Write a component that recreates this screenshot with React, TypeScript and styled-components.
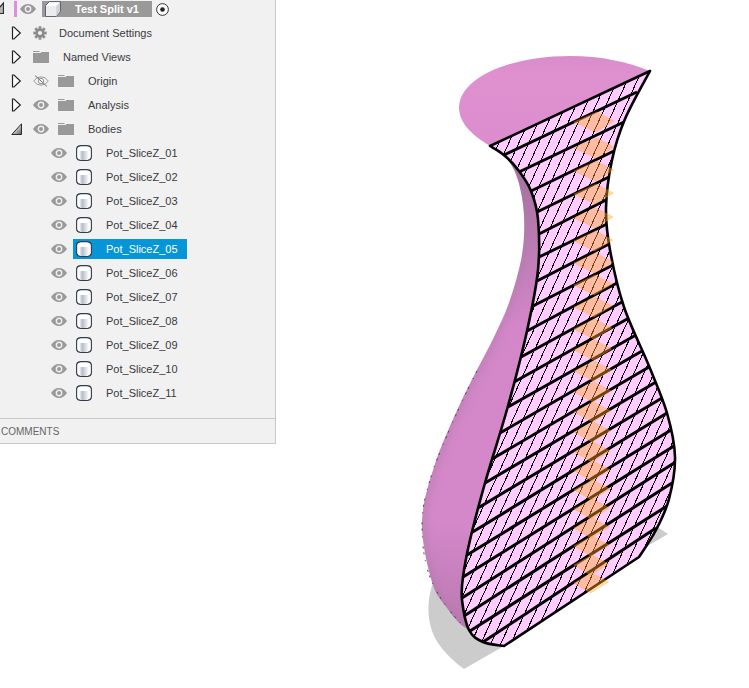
import React, { useState } from "react";
import styled, { createGlobalStyle } from "styled-components";

const GlobalStyle = createGlobalStyle`
  *, *::before, *::after { box-sizing: border-box; }
  body {
    margin: 0;
    background: #ffffff;
    color: #3a3a3e;
    font-family: "Liberation Sans", Arial, sans-serif;
    font-size: 11px;
    line-height: 16px;
  }
`;

const Page = styled.main`
  display: flex;
  align-items: flex-start;
  min-height: 100vh;
`;

const Browser = styled.aside`
  flex: none;
  width: 276px;
  background: #f1f1f1;
  border: solid #c8c8c8;
  border-width: 0 1px 1px 0;
`;

const Tree = styled.ul`
  margin: 0;
  padding: 0 0 13px;
  list-style: none;
`;

const Row = styled.li<{ $indent: number }>`
  display: flex;
  align-items: center;
  height: 24px;
  padding-left: ${(p) => p.$indent}px;
`;

const RootRow = styled.li`
  display: flex;
  align-items: center;
  height: 21px;
  padding: 1px 0 4px;
`;

const IconButton = styled.button<{ $gap: number }>`
  display: flex;
  flex: none;
  margin: 0 ${(p) => p.$gap}px 0 0;
  padding: 0;
  border: 0;
  background: none;
  cursor: pointer;
`;

const ColorBar = styled.span`
  width: 3px;
  height: 16px;
  margin: 0 3px 0 10px;
  background: #e38be3;
`;

const RootLabel = styled.button`
  display: flex;
  align-items: center;
  gap: 14px;
  height: 16px;
  margin: 0 4px 0 6px;
  padding: 0 13px 0 3px;
  border: 0;
  background: #999999;
  color: #ffffff;
  font: inherit;
  font-weight: bold;
  cursor: pointer;
`;

const ItemLabel = styled.span<{ $gap?: number }>`
  display: flex;
  align-items: center;
  gap: ${(p) => p.$gap ?? 14}px;
  white-space: nowrap;
`;

const BodyLabel = styled.button<{ $selected: boolean }>`
  display: flex;
  align-items: center;
  gap: 14px;
  height: 20px;
  padding: 0 9px 0 3px;
  border: 0;
  background: ${(p) => (p.$selected ? "#0696d7" : "transparent")};
  color: ${(p) => (p.$selected ? "#ffffff" : "inherit")};
  font: inherit;
  white-space: nowrap;
  cursor: pointer;
`;

const Comments = styled.h2`
  height: 25px;
  margin: 0;
  padding: 1px 1px 0;
  border-top: 1px solid #c8c8c8;
  color: #666666;
  font-size: 10px;
  font-weight: normal;
  line-height: 24px;
`;

const Viewport = styled.section`
  flex: 1;
  min-width: 0;
`;

const Drawing = styled.svg`
  display: block;
  width: 100%;
  height: auto;
`;

const Eye = ({ hidden = false }: { hidden?: boolean }) => (
  <svg width="16" height="16" viewBox="0 0 16 16" aria-hidden="true">
    {hidden ? (
      <g fill="none" stroke="#999" strokeWidth="1">
        <path d="M.7 8Q3.5 3.8 8 3.8T15.3 8Q12.5 12.2 8 12.2T.7 8Z" />
        <circle cx="8" cy="8" r="2.7" />
        <path d="M2 2.5L14 13.5" stroke="#777" />
      </g>
    ) : (
      <>
        <path d="M0 8Q3.3 3 8 3T16 8Q12.7 13 8 13T0 8Z" fill="#999" />
        <circle cx="8" cy="8" r="2.7" fill="#999" stroke="#f1f1f1" strokeWidth="1.4" />
      </>
    )}
  </svg>
);

const Folder = () => (
  <svg width="16" height="16" viewBox="0 0 16 16" aria-hidden="true">
    <path d="M0 2h6l1 1H0zM0 4h7.5l1-1H16v11H0z" fill="#999" />
  </svg>
);

const Gear = () => (
  <svg width="14" height="14" viewBox="-7 -7 14 14" aria-hidden="true">
    {[0, 45, 90, 135].map((a) => (
      <rect key={a} x="-1.4" y="-6.7" width="2.8" height="13.4" fill="#8c8c8c" transform={`rotate(${a})`} />
    ))}
    <circle r="4.6" fill="#8c8c8c" />
    <circle r="2.1" fill="#f1f1f1" />
  </svg>
);

const Arrow = ({ open = false }: { open?: boolean }) => (
  <svg width="11" height="14" viewBox="0 0 11 14" aria-hidden="true">
    {open ? (
      <>
        <defs>
          <linearGradient id="arrowShade" x1="0" y1="0" x2="1" y2="1">
            <stop offset="0.3" stopColor="#f5f5f5" />
            <stop offset="1" stopColor="#555" />
          </linearGradient>
        </defs>
        <path d="M.8 12.5L10.5 1.8V12.5Z" fill="url(#arrowShade)" stroke="#2b2b2b" />
      </>
    ) : (
      <path d="M1.5 1H3L9.3 7L3 13H1.5Z" fill="#fafafa" stroke="#222" strokeWidth="1.2" />
    )}
  </svg>
);

const RootArrow = () => (
  <svg width="4" height="16" viewBox="0 0 4 16" aria-hidden="true">
    <path d="M0 6L3.5 2V12.5H0Z" fill="#b5b5b5" />
    <path d="M0 6L3.5 2V12.5H0" fill="none" stroke="#2b2b2b" strokeWidth="1.2" />
  </svg>
);

const Cube = () => (
  <svg width="16" height="16" viewBox="0 0 16 16" aria-hidden="true">
    <path d="M.6 4.6L4.3.6H15.4V10.6L11.3 15.4H.6Z" fill="#fff" stroke="#555b66" />
    <path d="M1 5H11.2V15H1Z" fill="#ececf0" />
    <path d="M11.2 5L15 1.2V10.5L11.2 15Z" fill="#cfd2d9" />
  </svg>
);

const Cylinder = () => (
  <svg width="16" height="16" viewBox="0 0 16 16" aria-hidden="true">
    <defs>
      <linearGradient id="bodyShade">
        <stop offset="0" stopColor="#e6e8ee" />
        <stop offset="0.3" stopColor="#b8bdc8" />
        <stop offset="1" stopColor="#f4f5f8" />
      </linearGradient>
    </defs>
    <path d="M.6 3.5Q1.5 .6 5 .6H11Q14.5 .6 15.4 3.5V12.5Q14.5 15.4 11 15.4H5Q1.5 15.4 .6 12.5Z" fill="#fff" stroke="#343b4a" strokeWidth="1.1" />
    <rect x="4" y="6" width="8" height="9" fill="url(#bodyShade)" />
  </svg>
);

const Target = () => (
  <svg width="13" height="13" viewBox="0 0 13 13" aria-hidden="true">
    <circle cx="6.5" cy="6.5" r="5.9" fill="#fafafa" stroke="#333" />
    <circle cx="6.5" cy="6.5" r="2.3" fill="#222" />
  </svg>
);

type Point = [number, number];

/* Ends of each slice seam, top to bottom: left wall and right wall of the cut. */
const seams: [Point, Point][] = [
  [[504, 155], [637, 92]],
  [[519, 172], [624, 122]],
  [[531, 191], [614, 151]],
  [[537, 212], [609, 177]],
  [[539, 234], [606, 200]],
  [[539, 257], [607, 224]],
  [[537, 281], [609, 244]],
  [[533, 306], [613, 265]],
  [[527, 331], [617, 283]],
  [[521, 357], [622, 302]],
  [[514, 382], [629, 318]],
  [[508, 407], [636, 335]],
  [[500, 433], [642, 351]],
  [[492, 459], [649, 367]],
  [[485, 483], [656, 382]],
  [[478, 508], [662, 398]],
  [[471, 533], [667, 413]],
  [[467, 555], [671, 430]],
  [[463, 577], [674, 446]],
  [[462, 598], [674, 463]],
  [[464, 616], [672, 483]],
  [[470, 631], [667, 506]],
  [[483, 642], [656, 528]],
];

const diamondY = [
  121, 147, 170, 193, 217, 240, 262, 284, 306, 328, 349, 370, 391, 411, 431, 451, 470, 489, 508, 527, 545, 564, 582,
];

/* Smooth path through the points, Catmull-Rom converted to Bézier segments. */
function curve(points: Point[]): string {
  return points
    .slice(0, -1)
    .map((p, i) => {
      const before = points[Math.max(i - 1, 0)];
      const next = points[i + 1];
      const after = points[Math.min(i + 2, points.length - 1)];
      const c = [
        p[0] + (next[0] - before[0]) / 6,
        p[1] + (next[1] - before[1]) / 6,
        next[0] - (after[0] - p[0]) / 6,
        next[1] - (after[1] - p[1]) / 6,
      ];
      return `C${c.join(" ")} ${next.join(" ")}`;
    })
    .join("");
}

const leftWall: Point[] = [
  [490, 146], [504, 155], [519, 171], [531, 191], [538, 219], [538, 270], [527, 331], [508, 406], [485, 483],
  [470, 540], [463, 577], [462, 600], [469, 630], [483, 642], [504, 646],
];
const rightWall: Point[] = [
  [639, 557], [656, 530], [669, 499], [675, 457], [667, 413], [649, 366], [624, 307], [610, 250], [606, 208],
  [612, 160], [625, 119], [650, 71],
];
const section = `M490 146${curve(leftWall)}L639 557${curve(rightWall)}Z`;

const outside: Point[] = [
  [490, 146], [507, 159], [518, 180], [524, 215], [522, 255], [510, 300], [494, 337],
  [460, 404], [434, 467], [422, 523], [432, 582], [447, 608], [467, 629], [504, 646],
];
const outline = `M490 146${curve(outside)}`;
const shell = `${outline}L560 560L560 300L560 200Z`;

const Vase = () => (
  <Drawing viewBox="276 0 473 688" role="img" aria-label="Section view of the sliced pot">
    <defs>
      <clipPath id="cut">
        <path d={section} />
      </clipPath>
      <clipPath id="shell">
        <path d={shell} />
      </clipPath>
      <linearGradient id="wall" gradientUnits="userSpaceOnUse" x1="0" y1="146" x2="0" y2="646">
        <stop offset="0" stopColor="#9d6f98" />
        <stop offset="0.1" stopColor="#ad74a7" />
        <stop offset="0.2" stopColor="#bd7cb5" />
        <stop offset="0.36" stopColor="#d386c8" />
        <stop offset="0.75" stopColor="#d488c9" />
        <stop offset="1" stopColor="#b677ae" />
      </linearGradient>
      <linearGradient id="rim" x1="0" y1="0" x2="0" y2="1">
        <stop offset="0" stopColor="#d98ccb" />
        <stop offset="0.2" stopColor="#de90cf" />
        <stop offset="1" stopColor="#dc8dcd" />
      </linearGradient>
      <filter id="soft" x="-20%" y="-5%" width="140%" height="110%">
        <feGaussianBlur stdDeviation="4" />
      </filter>
    </defs>
    <path d="M434 580C426 600 426 625 438 643C444 652 452 660 464 669L504 646L470 580Z" fill="#cccccc" />
    <path d="M656 526L668 534L639 551Z" fill="#cccccc" />
    <path d={shell} fill="url(#wall)" />
    <g clipPath="url(#shell)">
      <path d={outline} fill="none" stroke="#a878a2" strokeOpacity="0.6" strokeWidth="6" filter="url(#soft)" />
    </g>
    <path d="M477 371C460 404 443 444 434 467C425 495 422 510 422 523C422 548 425 566 432 582C440 600 455 619 467 629" fill="none" stroke="#4a3a48" strokeWidth="1" strokeDasharray="2 6 1 9 2 4" />
    <path d="M490 146C470 134 459 122 459 107C460 77 511 56 570 56C602 56 627 62 650 71Z" fill="url(#rim)" />
    <path d={section} fill="#ffccff" />
    <g clipPath="url(#cut)">
      <g stroke="#000" strokeWidth="1" shapeRendering="crispEdges">
        {Array.from({ length: 54 }, (_, i) => {
          const x = 188 + i * 10;
          return <line key={i} x1={x} y1="650" x2={x + 264} y2="70" />;
        })}
      </g>
      <g stroke="#000" strokeWidth="3">
        {seams.map(([a, b]) => (
          <line key={a[1]} x1={a[0]} y1={a[1]} x2={b[0]} y2={b[1]} />
        ))}
      </g>
    </g>
    <path d={section} fill="none" stroke="#000" strokeWidth="2.6" strokeLinejoin="round" />
    <g fill="#ffa526" fillOpacity="0.42" stroke="#ffa526" strokeOpacity="0.3" strokeWidth="1">
      {diamondY.map((y, i) => {
        const right = 614 - i * 0.25;
        return <path key={y} d={`M574 ${y + 1}L${right - 17} ${y - 9}L${right} ${y}L${right - 18} ${y + 11}Z`} />;
      })}
    </g>
  </Drawing>
);

const bodies = Array.from({ length: 11 }, (_, i) => `Pot_SliceZ_${String(i + 1).padStart(2, "0")}`);

export default function App() {
  const [selected, setSelected] = useState("Pot_SliceZ_05");
  return (
    <>
      <GlobalStyle />
      <Page>
        <Browser>
          <Tree>
            <RootRow>
              <IconButton $gap={0} aria-label="Collapse Test Split v1"><RootArrow /></IconButton>
              <ColorBar />
              <IconButton $gap={0} aria-label="Hide Test Split v1"><Eye /></IconButton>
              <RootLabel><Cube />Test Split v1</RootLabel>
              <IconButton $gap={0} aria-label="Activate Test Split v1"><Target /></IconButton>
            </RootRow>
            <Row $indent={11}>
              <IconButton $gap={11} aria-label="Expand Document Settings"><Arrow /></IconButton>
              <ItemLabel $gap={12}><Gear />Document Settings</ItemLabel>
            </Row>
            <Row $indent={11}>
              <IconButton $gap={11} aria-label="Expand Named Views"><Arrow /></IconButton>
              <ItemLabel><Folder />Named Views</ItemLabel>
            </Row>
            {["Origin", "Analysis", "Bodies"].map((name) => (
              <Row $indent={11} key={name}>
                <IconButton $gap={11} aria-label={`Toggle ${name}`}><Arrow open={name === "Bodies"} /></IconButton>
                <IconButton $gap={9} aria-label={`Visibility of ${name}`}><Eye hidden={name === "Origin"} /></IconButton>
                <ItemLabel><Folder />{name}</ItemLabel>
              </Row>
            ))}
            {bodies.map((name) => (
              <Row $indent={51} key={name}>
                <IconButton $gap={6} aria-label={`Visibility of ${name}`}><Eye /></IconButton>
                <BodyLabel $selected={name === selected} onClick={() => setSelected(name)}>
                  <Cylinder />{name}
                </BodyLabel>
              </Row>
            ))}
          </Tree>
          <Comments>COMMENTS</Comments>
        </Browser>
        <Viewport>
          <Vase />
        </Viewport>
      </Page>
    </>
  );
}
